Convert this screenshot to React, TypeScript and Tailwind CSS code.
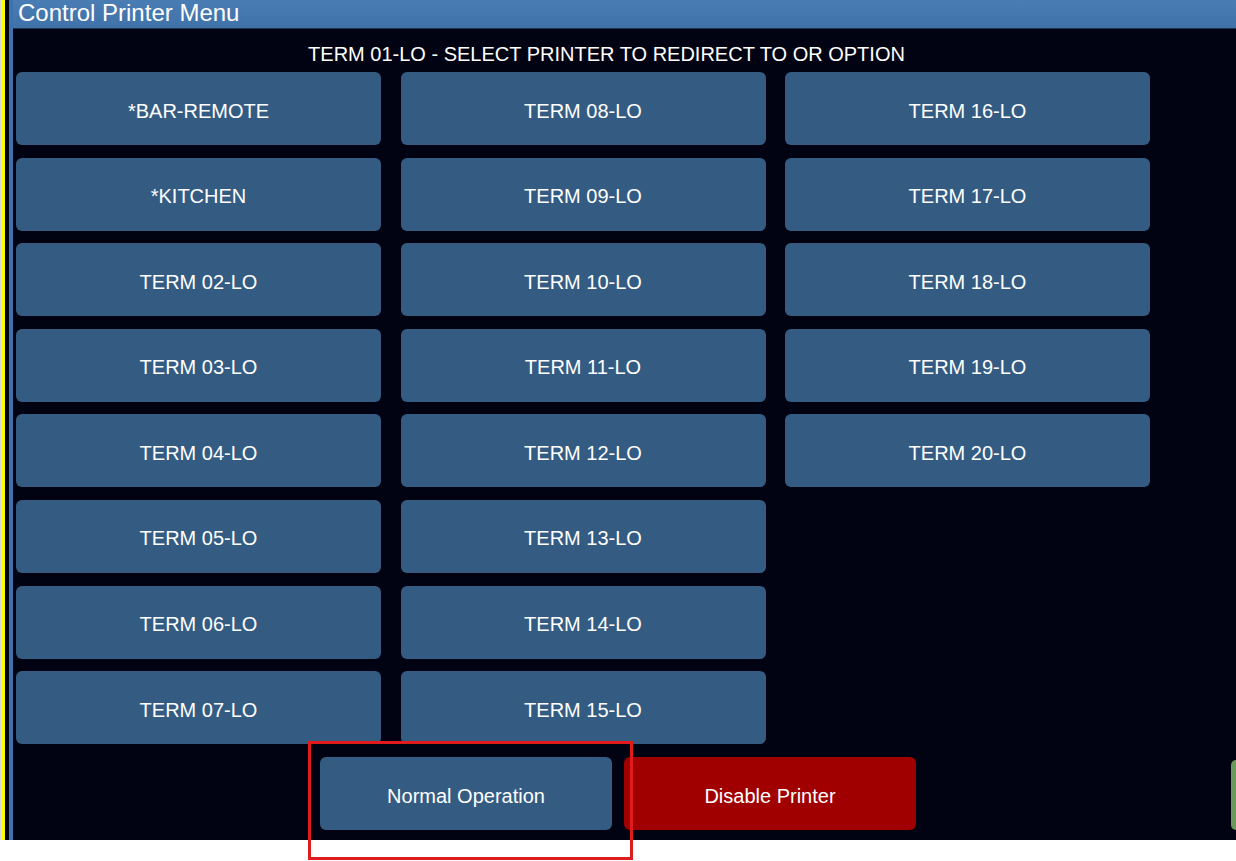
import React from "react";

const col1 = ["*BAR-REMOTE", "*KITCHEN", "TERM 02-LO", "TERM 03-LO", "TERM 04-LO", "TERM 05-LO", "TERM 06-LO", "TERM 07-LO"];
const col2 = ["TERM 08-LO", "TERM 09-LO", "TERM 10-LO", "TERM 11-LO", "TERM 12-LO", "TERM 13-LO", "TERM 14-LO", "TERM 15-LO"];
const col3 = ["TERM 16-LO", "TERM 17-LO", "TERM 18-LO", "TERM 19-LO", "TERM 20-LO"];

function Btn({ label }: { label: string }) {
  return (
    <div className="h-[73px] rounded-[6px] bg-[#345c83] flex items-center justify-center text-white text-[20px] pt-[4px]">
      {label}
    </div>
  );
}

export default function App() {
  return (
    <div
      className="relative w-[1236px] h-[861px] bg-white overflow-hidden"
      style={{ fontFamily: '"Liberation Sans", Arial, sans-serif' }}
    >
      <div className="flex h-[840px]">
        <div className="w-[1px] bg-[#d8d8d8]" />
        <div className="w-[4px] bg-[#ffff00]" />
        <div className="w-[4px] bg-[#020312]" />
        <div className="w-[4px] bg-[#3c73ad]" />
        <div className="flex-1 flex flex-col bg-[#020312]">
          <div className="h-[29px] bg-gradient-to-b from-[#4a7db4] to-[#3f72a8] border-b border-[#1c3550] text-white text-[24px] leading-[26px] pl-[5px] pt-[0px]">
            Control Printer Menu
          </div>
          <div className="w-[1187px] text-center text-white text-[20px] leading-[22px] mt-[14px]">
            TERM 01-LO - SELECT PRINTER TO REDIRECT TO OR OPTION
          </div>
          <div className="mt-[7px] pl-[3px] grid grid-cols-[365px_365px_365px] gap-x-[19.5px]">
            {[col1, col2, col3].map((col, i) => (
              <div key={i} className="flex flex-col gap-y-[12.6px]">
                {col.map((l) => (
                  <Btn key={l} label={l} />
                ))}
              </div>
            ))}
          </div>
          <div className="mt-[13px] pl-[307px] flex gap-[12px]">
            <div className="w-[292px] h-[73px] rounded-[6px] bg-[#345c83] flex items-center justify-center text-white text-[20px] pt-[4px]">
              Normal Operation
            </div>
            <div className="w-[292px] h-[73px] rounded-[6px] bg-[#a00000] flex items-center justify-center text-white text-[20px] pt-[4px]">
              Disable Printer
            </div>
          </div>
        </div>
      </div>
      <div className="absolute left-[1231px] top-[760px] w-[12px] h-[70px] rounded-[5px] bg-[#6a9a5a]" />
      <div className="absolute left-[308px] top-[741px] w-[325px] h-[119px] border-[3px] border-[#e01b1b]" />
    </div>
  );
}
